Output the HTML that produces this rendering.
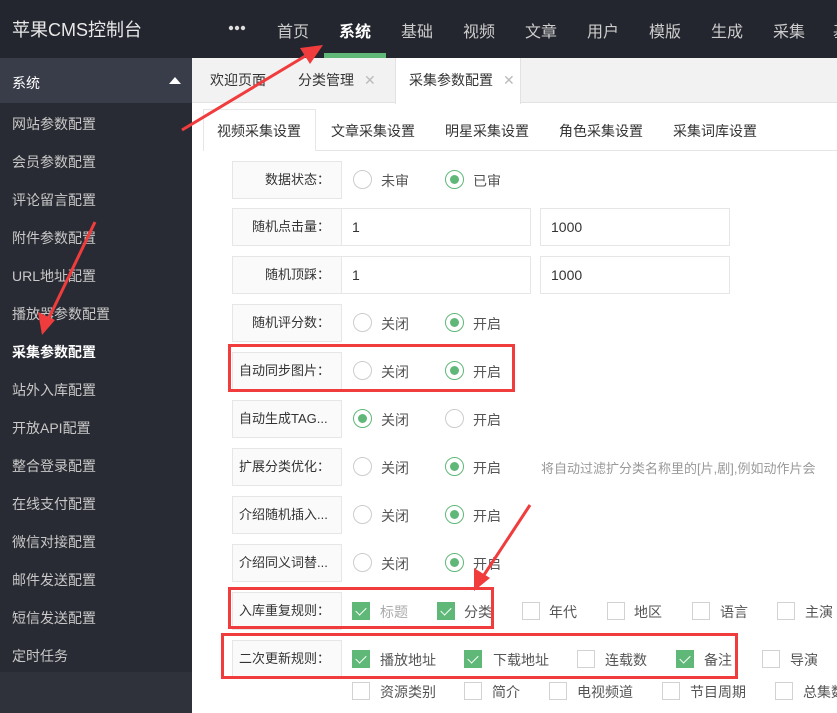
<!DOCTYPE html>
<html><head><meta charset="utf-8"><style>
*{margin:0;padding:0;box-sizing:border-box}
body{width:837px;height:713px;overflow:hidden;position:relative;background:#fff;font-family:"Liberation Sans","Noto Sans CJK SC",sans-serif;font-size:14px;color:#333}
.hd{position:absolute;left:0;top:0;width:837px;height:58px;background:#23262e}
.logo{position:absolute;left:12px;top:16px;font-size:18px;color:#e8e8e8}
.nav{position:absolute;top:18px;font-size:16px;color:#ccc}
.bar{position:absolute;left:324px;top:53px;width:62px;height:5px;background:#5fb878}
.sb{position:absolute;left:0;top:58px;width:192px;height:655px;background:#282b33}
.sbh{position:absolute;left:0;top:0;width:192px;height:45px;background:#393d49;color:#fff;font-size:14px;padding:15px 12px}
.sbh:after{content:"";position:absolute;right:11px;top:19px;border:6px solid transparent;border-bottom:7px solid #fff;border-top:0}
.si{position:absolute;left:12px;font-size:14px;color:#c8c8c8}
.tabs{position:absolute;left:192px;top:58px;width:645px;height:45px;background:#f2f2f2;border-bottom:1px solid #e2e2e2}
.tb{position:absolute;top:12px;font-size:14px;color:#333}
.x{color:#bbb;margin-left:10px}
.act{position:absolute;left:395px;top:58px;width:126px;height:46px;background:#fff;border-left:1px solid #e2e2e2;border-right:1px solid #e2e2e2}
.st{position:absolute;top:121px;font-size:14px;color:#333}
.stline{position:absolute;left:203px;top:150px;width:634px;height:1px;background:#e6e6e6}
.stact{position:absolute;left:203px;top:109px;width:113px;height:42px;background:#fff;border:1px solid #e6e6e6;border-bottom:none}
.lb{position:absolute;left:232px;width:110px;height:38px;background:#fafafa;border:1px solid #e6e6e6;font-size:13px;line-height:36px;text-align:right;padding-right:11px;white-space:nowrap;overflow:hidden}
.rd{position:absolute;width:19px;height:19px;border:1px solid #ccc;border-radius:50%;background:#fff}
.rd.on{border-color:#5fb878}
.rd.on:after{content:"";position:absolute;left:4px;top:4px;width:9px;height:9px;border-radius:50%;background:#5fb878}
.t{position:absolute;font-size:14px;color:#555}
.in{position:absolute;height:38px;width:190px;border:1px solid #e6e6e6;padding:0 10px;line-height:36px;font-size:14px}
.cb{position:absolute;width:18px;height:18px;border:1px solid #d2d2d2;background:#fff}
.cb.on{background:#5fb878;border-color:#5fb878}
.cb.on:after{content:"";position:absolute;left:5px;top:2px;width:5px;height:9px;border:solid #fff;border-width:0 1.5px 1.5px 0;transform:rotate(45deg)}
.red{position:absolute;border:3px solid #f03c3c}
</style></head><body>
<div class="hd">
<div class="logo">苹果CMS控制台</div>
<svg style="position:absolute;left:225px;top:23px" width="24" height="10"><g fill="#ddd"><circle cx="6" cy="5" r="2.2"/><circle cx="12" cy="5" r="2.2"/><circle cx="18" cy="5" r="2.2"/></g></svg>
<div class="nav" style="left:277px">首页</div>
<div class="nav" style="left:339px;color:#fff;font-weight:bold">系统</div>
<div class="nav" style="left:401px">基础</div>
<div class="nav" style="left:463px">视频</div>
<div class="nav" style="left:525px">文章</div>
<div class="nav" style="left:587px">用户</div>
<div class="nav" style="left:649px">模版</div>
<div class="nav" style="left:711px">生成</div>
<div class="nav" style="left:773px">采集</div>
<div class="nav" style="left:833px">基</div>
<div class="bar"></div>
</div>
<div class="sb">
<div class="sbh">系统</div>
<div class="si" style="top:56px">网站参数配置</div>
<div class="si" style="top:94px">会员参数配置</div>
<div class="si" style="top:132px">评论留言配置</div>
<div class="si" style="top:170px">附件参数配置</div>
<div class="si" style="top:208px">URL地址配置</div>
<div class="si" style="top:246px">播放器参数配置</div>
<div class="si" style="top:284px;color:#fff;font-weight:bold">采集参数配置</div>
<div class="si" style="top:322px">站外入库配置</div>
<div class="si" style="top:360px">开放API配置</div>
<div class="si" style="top:398px">整合登录配置</div>
<div class="si" style="top:436px">在线支付配置</div>
<div class="si" style="top:474px">微信对接配置</div>
<div class="si" style="top:512px">邮件发送配置</div>
<div class="si" style="top:550px">短信发送配置</div>
<div class="si" style="top:588px">定时任务</div>
<div style="position:absolute;left:0;top:614px;width:192px;height:41px;background:#2f323a"></div>
</div>
<div class="tabs">
<div class="tb" style="left:18px">欢迎页面</div>
<div class="tb" style="left:106px">分类管理<span class="x">✕</span></div>
</div>
<div class="act"><div class="tb" style="left:13px">采集参数配置<span class="x">✕</span></div></div>
<div class="stline"></div><div class="stact"></div>
<div class="st" style="left:217px">视频采集设置</div>
<div class="st" style="left:331px">文章采集设置</div>
<div class="st" style="left:445px">明星采集设置</div>
<div class="st" style="left:559px">角色采集设置</div>
<div class="st" style="left:673px">采集词库设置</div>

<div class="lb" style="top:161px">数据状态：</div>
<div class="rd" style="left:353px;top:170px"></div><div class="t" style="left:381px;top:171px">未审</div>
<div class="rd on" style="left:445px;top:170px"></div><div class="t" style="left:473px;top:171px">已审</div>

<div class="lb" style="top:208px">随机点击量：</div>
<div class="in" style="left:341px;top:208px">1</div><div class="in" style="left:540px;top:208px">1000</div>
<div class="lb" style="top:256px">随机顶踩：</div>
<div class="in" style="left:341px;top:256px">1</div><div class="in" style="left:540px;top:256px">1000</div>

<div class="lb" style="top:304px">随机评分数：</div>
<div class="rd" style="left:353px;top:313px"></div><div class="t" style="left:381px;top:314px">关闭</div>
<div class="rd on" style="left:445px;top:313px"></div><div class="t" style="left:473px;top:314px">开启</div>

<div class="lb" style="top:352px">自动同步图片：</div>
<div class="rd" style="left:353px;top:361px"></div><div class="t" style="left:381px;top:362px">关闭</div>
<div class="rd on" style="left:445px;top:361px"></div><div class="t" style="left:473px;top:362px">开启</div>

<div class="lb" style="top:400px;text-align:left;padding-left:6px">自动生成TAG...</div>
<div class="rd on" style="left:353px;top:409px"></div><div class="t" style="left:381px;top:410px">关闭</div>
<div class="rd" style="left:445px;top:409px"></div><div class="t" style="left:473px;top:410px">开启</div>

<div class="lb" style="top:448px">扩展分类优化：</div>
<div class="rd" style="left:353px;top:457px"></div><div class="t" style="left:381px;top:458px">关闭</div>
<div class="rd on" style="left:445px;top:457px"></div><div class="t" style="left:473px;top:458px">开启</div>
<div class="t" style="left:541px;top:458px;color:#999;font-size:13px;white-space:nowrap">将自动过滤扩分类名称里的[片,剧],例如动作片会</div>

<div class="lb" style="top:496px;text-align:left;padding-left:6px">介绍随机插入...</div>
<div class="rd" style="left:353px;top:505px"></div><div class="t" style="left:381px;top:506px">关闭</div>
<div class="rd on" style="left:445px;top:505px"></div><div class="t" style="left:473px;top:506px">开启</div>

<div class="lb" style="top:544px;text-align:left;padding-left:6px">介绍同义词替...</div>
<div class="rd" style="left:353px;top:553px"></div><div class="t" style="left:381px;top:554px">关闭</div>
<div class="rd on" style="left:445px;top:553px"></div><div class="t" style="left:473px;top:554px">开启</div>

<div class="lb" style="top:592px">入库重复规则：</div>
<div class="cb on" style="left:352px;top:602px"></div><div class="t" style="left:380px;top:602px;color:#aaa">标题</div>
<div class="cb on" style="left:437px;top:602px"></div><div class="t" style="left:464px;top:602px">分类</div>
<div class="cb" style="left:522px;top:602px"></div><div class="t" style="left:549px;top:602px">年代</div>
<div class="cb" style="left:607px;top:602px"></div><div class="t" style="left:634px;top:602px">地区</div>
<div class="cb" style="left:692px;top:602px"></div><div class="t" style="left:720px;top:602px">语言</div>
<div class="cb" style="left:777px;top:602px"></div><div class="t" style="left:805px;top:602px">主演</div>

<div class="lb" style="top:640px">二次更新规则：</div>
<div class="cb on" style="left:352px;top:650px"></div><div class="t" style="left:380px;top:650px">播放地址</div>
<div class="cb on" style="left:464px;top:650px"></div><div class="t" style="left:493px;top:650px">下载地址</div>
<div class="cb" style="left:577px;top:650px"></div><div class="t" style="left:605px;top:650px">连载数</div>
<div class="cb on" style="left:676px;top:650px"></div><div class="t" style="left:704px;top:650px">备注</div>
<div class="cb" style="left:762px;top:650px"></div><div class="t" style="left:790px;top:650px">导演</div>
<div class="cb" style="left:352px;top:682px"></div><div class="t" style="left:380px;top:682px">资源类别</div>
<div class="cb" style="left:464px;top:682px"></div><div class="t" style="left:492px;top:682px">简介</div>
<div class="cb" style="left:549px;top:682px"></div><div class="t" style="left:577px;top:682px">电视频道</div>
<div class="cb" style="left:662px;top:682px"></div><div class="t" style="left:690px;top:682px">节目周期</div>
<div class="cb" style="left:775px;top:682px"></div><div class="t" style="left:803px;top:682px;white-space:nowrap">总集数</div>

<div class="red" style="left:228px;top:344px;width:287px;height:48px"></div>
<div class="red" style="left:228px;top:587px;width:266px;height:42px"></div>
<div class="red" style="left:221px;top:633px;width:517px;height:46px"></div>

<svg style="position:absolute;left:0;top:0" width="837" height="713">
<g stroke="#f03c3c" stroke-width="3" fill="#f03c3c">
<line x1="182" y1="130" x2="312" y2="52"/><polygon points="323,45 300,48 310,64" stroke="none"/>
<line x1="95" y1="222" x2="47" y2="322"/><polygon points="42,335 38,312 55,320" stroke="none"/>
<line x1="530" y1="505" x2="482" y2="578"/><polygon points="474,591 474,568 490,578" stroke="none"/>
</g></svg>
</body></html>
